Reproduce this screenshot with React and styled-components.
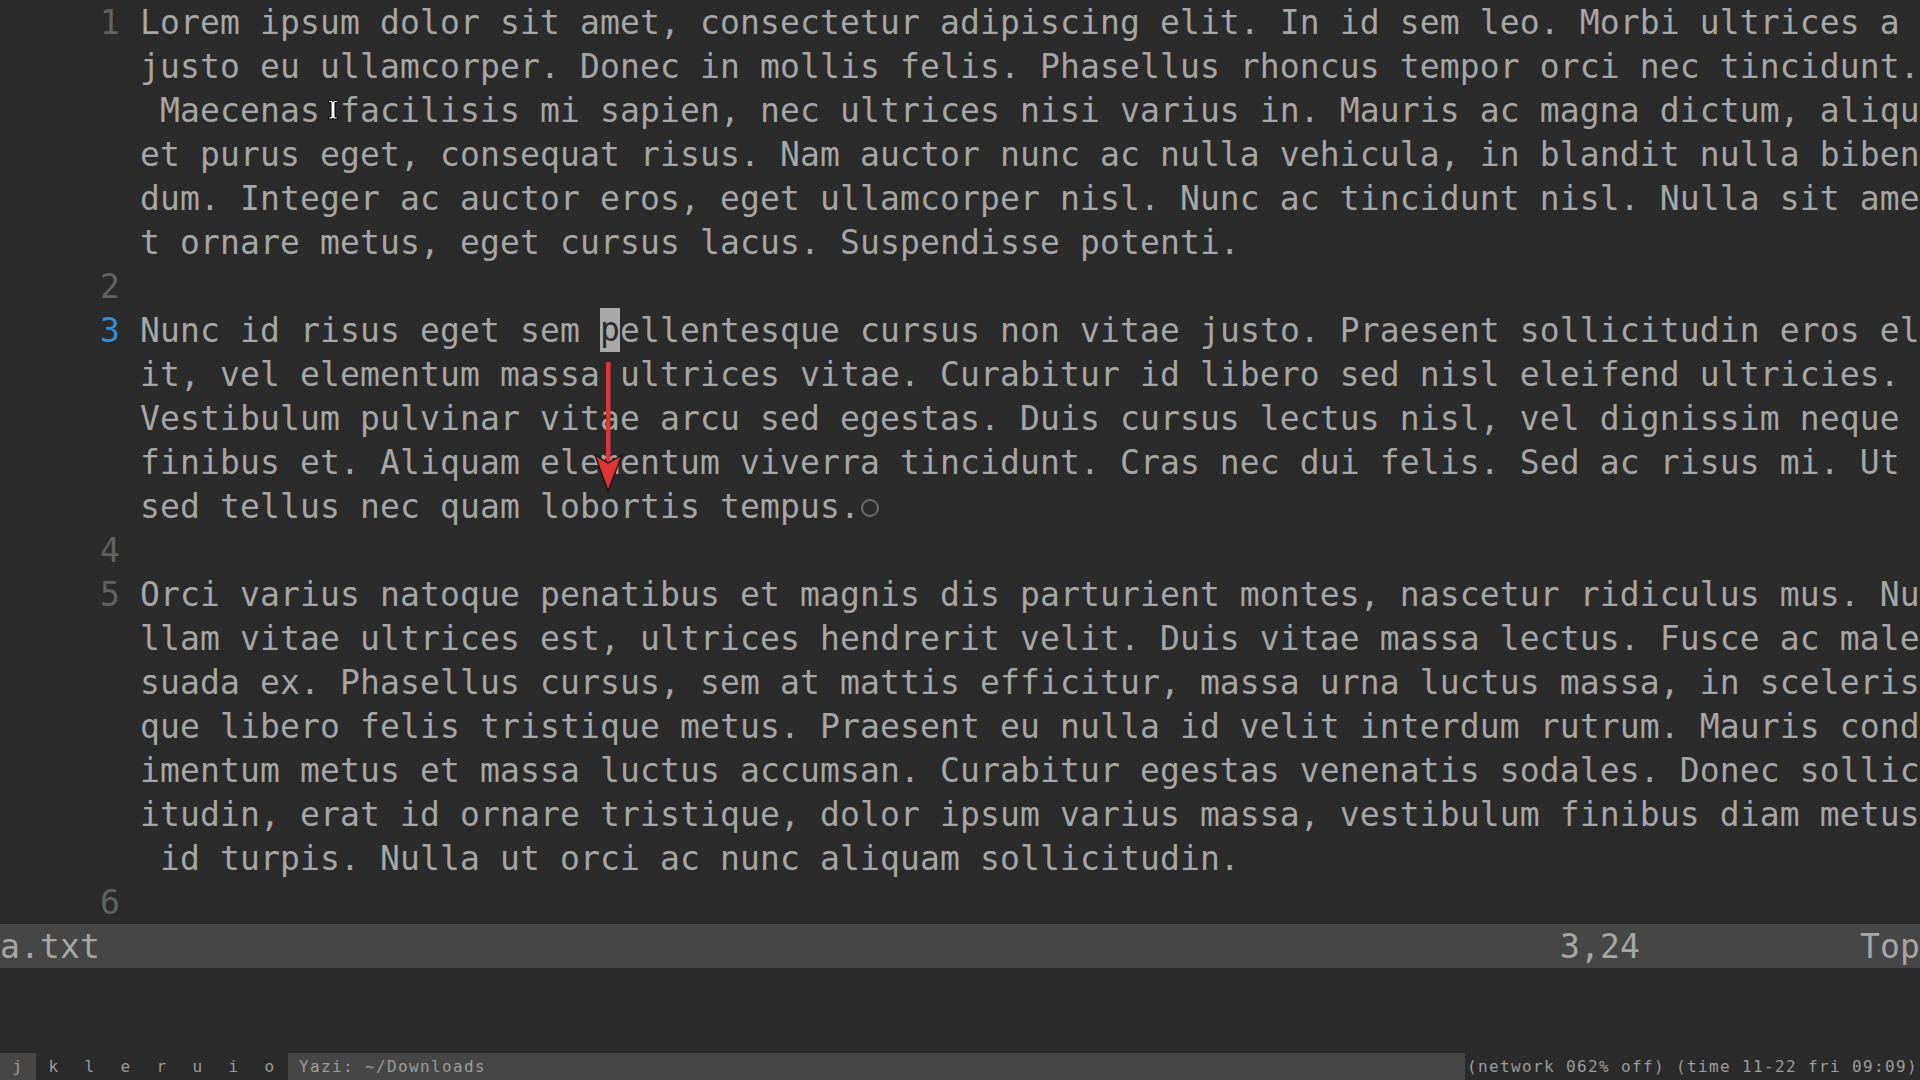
import React from 'react'
import styled, { createGlobalStyle } from 'styled-components'

const GlobalStyle = createGlobalStyle`
  html, body {
    margin: 0;
    padding: 0;
    background: #2b2b2b;
  }
  body {
    width: 1920px;
    height: 1080px;
    overflow: hidden;
  }
`

// each logical line of a.txt, already wrapped at 89 columns like vim shows it
const buffer = [
  {
    nr: 1,
    rows: [
      'Lorem ipsum dolor sit amet, consectetur adipiscing elit. In id sem leo. Morbi ultrices a ',
      'justo eu ullamcorper. Donec in mollis felis. Phasellus rhoncus tempor orci nec tincidunt.',
      ' Maecenas facilisis mi sapien, nec ultrices nisi varius in. Mauris ac magna dictum, aliqu',
      'et purus eget, consequat risus. Nam auctor nunc ac nulla vehicula, in blandit nulla biben',
      'dum. Integer ac auctor eros, eget ullamcorper nisl. Nunc ac tincidunt nisl. Nulla sit ame',
      't ornare metus, eget cursus lacus. Suspendisse potenti.'
    ]
  },
  { nr: 2, rows: [''] },
  {
    nr: 3,
    cursor: { row: 0, col: 23 },
    eol: 4,
    rows: [
      'Nunc id risus eget sem pellentesque cursus non vitae justo. Praesent sollicitudin eros el',
      'it, vel elementum massa ultrices vitae. Curabitur id libero sed nisl eleifend ultricies. ',
      'Vestibulum pulvinar vitae arcu sed egestas. Duis cursus lectus nisl, vel dignissim neque ',
      'finibus et. Aliquam elementum viverra tincidunt. Cras nec dui felis. Sed ac risus mi. Ut ',
      'sed tellus nec quam lobortis tempus.'
    ]
  },
  { nr: 4, rows: [''] },
  {
    nr: 5,
    rows: [
      'Orci varius natoque penatibus et magnis dis parturient montes, nascetur ridiculus mus. Nu',
      'llam vitae ultrices est, ultrices hendrerit velit. Duis vitae massa lectus. Fusce ac male',
      'suada ex. Phasellus cursus, sem at mattis efficitur, massa urna luctus massa, in sceleris',
      'que libero felis tristique metus. Praesent eu nulla id velit interdum rutrum. Mauris cond',
      'imentum metus et massa luctus accumsan. Curabitur egestas venenatis sodales. Donec sollic',
      'itudin, erat id ornare tristique, dolor ipsum varius massa, vestibulum finibus diam metus',
      ' id turpis. Nulla ut orci ac nunc aliquam sollicitudin.'
    ]
  },
  { nr: 6, rows: [''] }
]

const workspaces = ['j', 'k', 'l', 'e', 'r', 'u', 'i', 'o']

const Screen = styled.div`
  display: flex;
  flex-direction: column;
  width: 1920px;
  height: 1080px;
  background: #2b2b2b;
`

const Terminal = styled.div`
  flex: 1;
  display: flex;
  flex-direction: column;
  font-family: "DejaVu Sans Mono", "Liberation Mono", monospace;
  font-size: 33px;
  letter-spacing: 0.13px;
  line-height: 44px;
  color: #a6a6a6;
`

const Editor = styled.div`
  position: relative;
  display: flex;
  flex-direction: column;
`

const Line = styled.div`
  display: grid;
  grid-template-columns: 140px 1fr;
`

const Gutter = styled.div`
  height: 44px;
  padding-top: 1px;
  box-sizing: border-box;
  padding-right: 20px;
  text-align: right;
  color: ${p => (p.$current ? '#2f8fdd' : '#626262')};
`

const Rows = styled.div`
  display: flex;
  flex-direction: column;
`

const Row = styled.div`
  height: 44px;
  padding-top: 1px;
  box-sizing: border-box;
  white-space: pre;
  overflow: hidden;
`

const Cursor = styled.span`
  display: inline-block;
  height: 44px;
  margin-top: -1px;
  vertical-align: top;
  background: #a9a9a9;
  color: #2b2b2b;
`

const EolMark = styled.span`
  display: inline-flex;
  align-items: center;
  justify-content: center;
  width: 20px;
  height: 44px;
  margin-top: -1px;
  vertical-align: top;
  padding-top: 3px;
  box-sizing: border-box;

  &::before {
    content: '';
    width: 14px;
    height: 14px;
    border: 2.5px solid #6c6c6c;
    border-radius: 50%;
  }
`

const StatusLine = styled.div`
  display: flex;
  justify-content: space-between;
  height: 44px;
  padding-top: 1px;
  box-sizing: border-box;
  background: #464646;
  white-space: pre;
`

const Ruler = styled.div`
  display: flex;
  justify-content: space-between;
  width: 360px;
`

const CmdLine = styled.div`
  height: 44px;
`

const Bar = styled.div`
  display: flex;
  height: 27px;
  font-family: "DejaVu Sans Mono", "Liberation Mono", monospace;
  font-size: 16px;
  letter-spacing: 1.37px;
  line-height: 27px;
  color: #9c9c9c;
  white-space: pre;
`

const Workspace = styled.div`
  width: 36px;
  text-align: center;
  background: ${p => (p.$active ? '#474747' : 'transparent')};
`

const Title = styled.div`
  flex: 1;
  padding-left: 11px;
  background: #464646;
`

const Clock = styled.div`
  padding: 0 2px 0 2px;
`

const Overlay = styled.svg`
  position: absolute;
  left: ${p => p.$x}px;
  top: ${p => p.$y}px;
  overflow: visible;
  pointer-events: none;
`

function TextRow({ text, cursorCol, eol }) {
  if (cursorCol !== undefined) {
    return (
      <Row>
        {text.slice(0, cursorCol)}
        <Cursor>{text[cursorCol]}</Cursor>
        {text.slice(cursorCol + 1)}
      </Row>
    )
  }
  return (
    <Row>
      {text}
      {eol && <EolMark />}
    </Row>
  )
}

function BufferLine({ line }) {
  return (
    <Line>
      <Gutter $current={!!line.cursor}>{line.nr}</Gutter>
      <Rows>
        {line.rows.map((text, i) => (
          <TextRow
            key={i}
            text={text}
            cursorCol={line.cursor && line.cursor.row === i ? line.cursor.col : undefined}
            eol={line.eol === i}
          />
        ))}
      </Rows>
    </Line>
  )
}

// red annotation arrow drawn over the text
const Arrow = () => (
  <Overlay $x={590} $y={360} width="36" height="136" viewBox="0 0 36 136">
    <rect x="16" y="2" width="4.5" height="102" fill="#e03434" />
    <polygon
      points="5,95 18,103 32,95 18,131"
      fill="#e03434"
      stroke="#111"
      strokeWidth="1.3"
      strokeLinejoin="miter"
    />
  </Overlay>
)

// text-selection mouse pointer
const IBeam = () => (
  <Overlay $x={327} $y={99} width="12" height="22" viewBox="0 0 12 22">
    <path
      d="M1.5 1.5h3.2l1.3 1 1.3-1h3.2v2H8v14.5h2.5v2H7.3l-1.3-1-1.3 1H1.5v-2H4V3.5H1.5z"
      fill="#fff"
      stroke="#000"
      strokeWidth="1"
    />
  </Overlay>
)

export default function App() {
  return (
    <>
      <GlobalStyle />
      <Screen>
        <Terminal>
          <Editor>
            {buffer.map(line => (
              <BufferLine key={line.nr} line={line} />
            ))}
            <Arrow />
            <IBeam />
          </Editor>
          <StatusLine>
            <span>a.txt</span>
            <Ruler>
              <span>3,24</span>
              <span>Top</span>
            </Ruler>
          </StatusLine>
          <CmdLine />
        </Terminal>
        <Bar>
          {workspaces.map((w, i) => (
            <Workspace key={w} $active={i === 0}>{w}</Workspace>
          ))}
          <Title>Yazi: ~/Downloads</Title>
          <Clock>(network 062% off) (time 11-22 fri 09:09)</Clock>
        </Bar>
      </Screen>
    </>
  )
}
